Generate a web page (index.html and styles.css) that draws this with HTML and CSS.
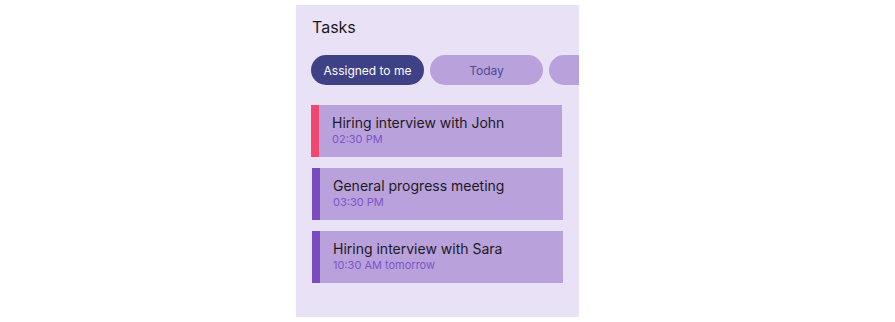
FILE: index.html
```html
<!DOCTYPE html>
<html>
<head>
<meta charset="utf-8">
<link rel="stylesheet" href="styles.css">
</head>
<body>
<div class="panel">
  <h1 class="title">Tasks</h1>
  <div class="chips">
    <button class="chip chip-active">Assigned to me</button>
    <button class="chip">Today</button>
    <button class="chip" aria-label="More"></button>
  </div>
  <div class="cards">
    <div class="card card-urgent first">
      <div class="card-title">Hiring interview with John</div>
      <div class="card-time">02:30 PM</div>
    </div>
    <div class="card">
      <div class="card-title">General progress meeting</div>
      <div class="card-time">03:30 PM</div>
    </div>
    <div class="card">
      <div class="card-title">Hiring interview with Sara</div>
      <div class="card-time">10:30 AM tomorrow</div>
    </div>
  </div>
</div>
</body>
</html>
```
FILE: styles.css
```css
html, body {
  margin: 0;
  padding: 0;
  background: #ffffff;
}
body {
  font-family: Inter, "Noto Sans", sans-serif;
}
.panel {
  margin: 5px 0 0 296px;
  width: 283px;
  height: 312px;
  background: #e9e1f5;
  overflow: hidden;
  box-sizing: border-box;
  padding: 12px 0 0 16px;
}
.title {
  margin: 0;
  font-size: 16px;
  line-height: 20px;
  font-weight: 400;
  color: #1b1b1f;
}
.chips {
  display: flex;
  gap: 6px;
  margin: 18px 0 0 -1px;
  white-space: nowrap;
}
.chip {
  flex: 0 0 113px;
  height: 30px;
  border: none;
  border-radius: 15px;
  background: #b9a1dc;
  color: #4b4c94;
  font-family: Inter, "Noto Sans", sans-serif;
  font-size: 12px;
  padding: 0;
}
.chip-active {
  background: #3f4186;
  color: #ffffff;
}
.cards {
  display: flex;
  flex-direction: column;
  gap: 11px;
  margin-top: 20px;
}
.card {
  width: 251px;
  height: 52px;
  box-sizing: border-box;
  background: #b9a1dc;
  border-left: 8px solid #7a4abf;
  padding: 9px 0 0 13px;
}
.card.first {
  margin-left: -1px;
}
.card-urgent {
  border-left-color: #f2456f;
}
.card-title {
  font-size: 14px;
  line-height: 18px;
  color: #1b1b1f;
}
.card-time {
  font-size: 11px;
  line-height: 14px;
  color: #7c55c9;
}
```
